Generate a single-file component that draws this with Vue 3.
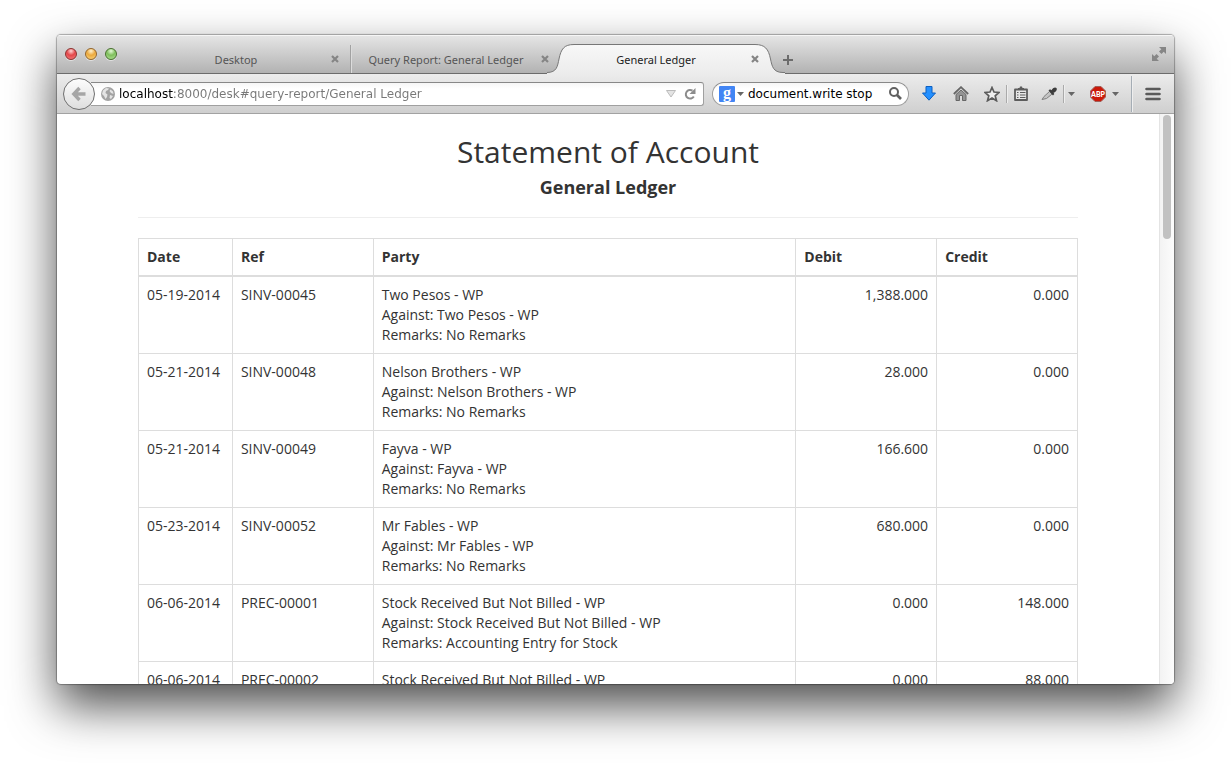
<script setup>
import { ref } from 'vue'

const tabs = [
  { title: 'Desktop', active: false },
  { title: 'Query Report: General Ledger', active: false },
  { title: 'General Ledger', active: true },
]

const address = ref('localhost:8000/desk#query-report/General Ledger')
const query = ref('document.write stop')

const stock = 'Stock Received But Not Billed - WP'
const rows = [
  { date: '05-19-2014', no: 'SINV-00045', party: 'Two Pesos - WP', remarks: 'No Remarks', debit: '1,388.000', credit: '0.000' },
  { date: '05-21-2014', no: 'SINV-00048', party: 'Nelson Brothers - WP', remarks: 'No Remarks', debit: '28.000', credit: '0.000' },
  { date: '05-21-2014', no: 'SINV-00049', party: 'Fayva - WP', remarks: 'No Remarks', debit: '166.600', credit: '0.000' },
  { date: '05-23-2014', no: 'SINV-00052', party: 'Mr Fables - WP', remarks: 'No Remarks', debit: '680.000', credit: '0.000' },
  { date: '06-06-2014', no: 'PREC-00001', party: stock, remarks: 'Accounting Entry for Stock', debit: '0.000', credit: '148.000' },
  { date: '06-06-2014', no: 'PREC-00002', party: stock, remarks: 'Accounting Entry for Stock', debit: '0.000', credit: '88.000' },
]
</script>

<template>
  <div class="stage">
    <div class="window">
      <header class="titlebar">
        <div class="lights">
          <button class="light red" aria-label="Close window"></button>
          <button class="light yellow" aria-label="Minimize window"></button>
          <button class="light green" aria-label="Zoom window"></button>
        </div>
        <nav class="tabs">
          <div v-for="tab in tabs" :key="tab.title" class="tab" :class="{ active: tab.active }">
            <svg v-if="tab.active" class="tab-shape" viewBox="0 0 238 30" width="238" height="30" aria-hidden="true">
              <defs>
                <linearGradient id="tabfill" x1="0" y1="0" x2="0" y2="1">
                  <stop offset="0" stop-color="#f8f8f8" />
                  <stop offset="1" stop-color="#ececec" />
                </linearGradient>
              </defs>
              <path d="M0 30V28.5C10 28.500 10.500 22 12 15C14 5 17 .500 27 .500H208C218 .500 221.500 5 223.500 15C225 22 226 28.500 236 28.500H238V30Z" fill="url(#tabfill)" />
              <path d="M0 28.500C10 28.500 10.500 22 12 15C14 5 17 .500 27 .500H208C218 .500 221.500 5 223.500 15C225 22 226 28.500 236 28.500H238" fill="none" stroke="#777" />
            </svg>
            <button class="tab-title">{{ tab.title }}</button>
            <button class="tab-close" :aria-label="'Close ' + tab.title">
              <svg viewBox="0 0 8 8" width="8" height="8"><path d="M1 1L7 7M7 1L1 7" stroke="#858585" stroke-width="2.200" /></svg>
            </button>
          </div>
        </nav>
        <button class="new-tab" aria-label="New tab">
          <svg viewBox="0 0 10 10" width="10" height="10"><path d="M5 0V10M0 5H10" stroke="#6c6c6c" stroke-width="2" /></svg>
        </button>
        <button class="fullscreen" aria-label="Full screen">
          <svg viewBox="0 0 14 14" width="14" height="14" fill="#868686">
            <path d="M7 0H14V7L11.700 4.700L9.500 7L7 4.500L9.300 2.300Z" />
            <path d="M0 7V14H7L4.700 11.700L7 9.500L4.500 7L2.300 9.300Z" />
          </svg>
        </button>
      </header>

      <div class="toolbar">
        <button class="back" aria-label="Back">
          <svg viewBox="0 0 16 16" width="16" height="16"><path d="M8.500 2L2.800 8L8.500 14M3.500 8H14.500" fill="none" stroke="#a6a6a6" stroke-width="3.400" /></svg>
        </button>
        <div class="address">
          <svg viewBox="0 0 14 14" width="14" height="14" aria-hidden="true">
            <circle cx="7" cy="7" r="7" fill="#a3a3a3" />
            <path d="M2 3.500L5 1L8 1.500L7 3L5 4L4.500 6L6.500 7.500L6 10L4.500 12L3 9L1 7ZM9.500 2.500L12 4.500L12.500 7L10 6L8.500 4ZM9 8L12 9L10 12L8.500 11Z" fill="#e4e4e4" />
          </svg>
          <input v-model="address" class="url" type="text" aria-label="Address" spellcheck="false" />
          <button class="plain" aria-label="Show history">
            <svg viewBox="0 0 10 8" width="10" height="8"><path d="M.500 .500H9.500L5 7Z" fill="#e4e4e4" stroke="#bbb" /></svg>
          </button>
          <button class="plain reload" aria-label="Reload">
            <svg viewBox="0 0 12 12" width="12" height="12">
              <path d="M8.500 2.700A4.300 4.300 0 1 0 9.800 8.500" fill="none" stroke="#8c8c8c" stroke-width="2" />
              <path d="M11.500 0V6H5.500Z" fill="#8c8c8c" />
            </svg>
          </button>
        </div>
        <div class="search">
          <button class="plain engine" aria-label="Search engine">
            <span class="g">g</span>
            <svg viewBox="0 0 7 4" width="7" height="4"><path d="M0 0H7L3.500 4Z" fill="#666" /></svg>
          </button>
          <input v-model="query" class="term" type="text" aria-label="Search" spellcheck="false" />
          <button class="plain" aria-label="Go">
            <svg viewBox="0 0 13 13" width="13" height="13" fill="none" stroke="#606060"><circle cx="5" cy="5" r="4" stroke-width="2" /><path d="M8 8L12 12" stroke-width="2.600" /></svg>
          </button>
        </div>

        <button class="tool" aria-label="Downloads">
          <svg viewBox="0 0 14 15" width="14" height="15"><path d="M4 .500H10V7H13.500L7 14.200L.500 7H4Z" fill="#2490ff" stroke="#0d5fc0" /></svg>
        </button>
        <button class="tool" aria-label="Home">
          <svg viewBox="0 0 16 15" width="16" height="15">
            <path d="M.800 8L8 1.200L15.200 8" fill="none" stroke="#666" stroke-width="1.800" />
            <path d="M3 8.500L8 4L13 8.500V14.500H9.500V9.500H6.500V14.500H3Z" fill="#949494" stroke="#666" />
          </svg>
        </button>
        <button class="tool star" aria-label="Bookmark">
          <svg viewBox="0 0 16 16" width="16" height="16"><path d="M8 1.500L10 6L15 6.500L11.200 9.800L12.500 14.700L8 12L3.500 14.700L4.800 9.800L1 6.500L6 6Z" fill="#eee" stroke="#5c5c5c" stroke-width="1.700" /></svg>
        </button>
        <i class="divider short"></i>
        <button class="tool narrow" aria-label="Bookmarks list">
          <svg viewBox="0 0 14 15" width="14" height="15">
            <path d="M1 3.500H13V14H1Z" fill="#e6e6e6" stroke="#5c5c5c" stroke-width="1.800" stroke-linejoin="round" />
            <path d="M4 4V2H5.500L6 .500H8L8.500 2H10V4Z" fill="#5c5c5c" />
            <path d="M3 6.500H4.500M6 6.500H11.500M3 9H4.500M6 9H11.500M3 11.500H4.500M6 11.500H11.500" stroke="#5c5c5c" stroke-width="1.200" />
          </svg>
        </button>
        <button class="tool narrow" aria-label="Colour picker">
          <svg viewBox="0 0 16 14" width="16" height="14">
            <path d="M1 12.500L3 9.500L8.500 4.500L11.200 7L5.500 11.500Z" fill="#c4c4c4" stroke="#808080" />
            <path d="M7.500 3.500L9 2.300L10.500 3.300C11.500 1 14 -.300 15.500 1C16.500 3 15 5 12.500 5.800L13.300 7L12 8.500Z" fill="#3c3c3c" />
          </svg>
        </button>
        <i class="divider short"></i>
        <button class="tool caret" aria-label="Picker menu">
          <svg viewBox="0 0 7 4" width="7" height="4"><path d="M0 0H7L3.500 4Z" fill="#666" /></svg>
        </button>
        <button class="tool abp" aria-label="Adblock Plus">
          <svg viewBox="0 0 16 16" width="16" height="16">
            <path d="M5 .500H11L15.500 5V11L11 15.500H5L.500 11V5Z" fill="#cb1a0b" stroke="#a0605a" />
            <text x="8" y="11" text-anchor="middle" class="abp-text">ABP</text>
          </svg>
        </button>
        <button class="tool caret" aria-label="Adblock menu">
          <svg viewBox="0 0 7 4" width="7" height="4"><path d="M0 0H7L3.500 4Z" fill="#666" /></svg>
        </button>
        <i class="divider tall"></i>
        <button class="tool menu" aria-label="Open menu">
          <svg viewBox="0 0 16 14" width="16" height="14"><path d="M1.500 2H14.500M1.500 7H14.500M1.500 12H14.500" stroke="#5a5a5a" stroke-width="2.600" stroke-linecap="round" /></svg>
        </button>
      </div>

      <div class="viewport">
        <main class="page">
          <h1>Statement of Account</h1>
          <h2>General Ledger</h2>
          <hr />
          <table>
            <colgroup>
              <col class="c10" /><col class="c15" /><col class="c45" /><col class="c15" /><col class="c15" />
            </colgroup>
            <thead>
              <tr><th>Date</th><th>Ref</th><th>Party</th><th>Debit</th><th>Credit</th></tr>
            </thead>
            <tbody>
              <tr v-for="row in rows" :key="row.no">
                <td>{{ row.date }}</td>
                <td>{{ row.no }}</td>
                <td>{{ row.party }}<br />Against: {{ row.party }}<br />Remarks: {{ row.remarks }}</td>
                <td class="num">{{ row.debit }}</td>
                <td class="num">{{ row.credit }}</td>
              </tr>
            </tbody>
          </table>
        </main>
        <div class="scrollbar"><div class="thumb"></div></div>
      </div>
    </div>
  </div>
</template>

<style>
body { background: #fff; }
</style>

<style scoped>
* { box-sizing: border-box; }
button, input { margin: 0; padding: 0; border: 0; background: none; font: inherit; color: inherit; outline: none; }
svg { display: block; flex: none; }

.stage {
  display: flex;
  height: 100vh;
  padding: 35px 57px 79px;
  overflow: hidden;
  font-family: "Open Sans", "Noto Sans", sans-serif;
}
.window {
  flex: 1;
  min-width: 0;
  display: flex;
  flex-direction: column;
  border-radius: 4px;
  overflow: hidden;
  background: #fff;
  box-shadow: 0 0 1px 1px rgba(0, 0, 0, .3), 0 22px 48px rgba(0, 0, 0, .7);
}

.titlebar {
  flex: none;
  display: flex;
  align-items: center;
  height: 39px;
  padding: 0 8px;
  border-bottom: 1px solid #6c6c6c;
  background: linear-gradient(#e6e6e6, #b2b2b2);
  box-shadow: inset 0 1px #f6f6f6;
  font-family: "Noto Sans", "Open Sans", sans-serif;
  font-size: 11px;
}
.lights { display: flex; gap: 8px; }
.light { width: 12px; height: 12px; border-radius: 50%; border: 1px solid; box-shadow: 0 1px rgba(255, 255, 255, .5); }
.red { border-color: #8c302e; background: radial-gradient(circle at 50% 20%, #ffd5d5 0, #e4474a 45%, #f58080 100%); }
.yellow { border-color: #93642a; background: radial-gradient(circle at 50% 20%, #fff2cf 0, #eca93c 45%, #fbd983 100%); }
.green { border-color: #48702f; background: radial-gradient(circle at 50% 20%, #e5fad8 0, #7fbf5c 45%, #b5e59a 100%); }
.tabs { display: flex; align-self: flex-end; margin-left: 24px; }
.tab { position: relative; display: flex; align-items: center; width: 210px; height: 28px; color: #555; }
.tab:first-child { box-shadow: inset -1px 0 #a2a2a2, 1px 0 #dcdcdc; }
.tab-shape { position: absolute; left: -14px; bottom: -1px; }
.tab-title { position: relative; flex: 1; height: 28px; text-align: center; }
.tab-close { position: relative; width: 8px; height: 8px; margin-right: 12px; }
.active { color: #222; }
.new-tab { align-self: flex-end; margin: 0 0 8px 12px; }
.fullscreen { margin-left: auto; }

.toolbar {
  flex: none;
  display: flex;
  align-items: center;
  height: 40px;
  padding-left: 6px;
  border-bottom: 1px solid #a2a2a2;
  background: linear-gradient(#ececec, #cfcfcf);
  font-family: "DejaVu Sans", "Noto Sans", sans-serif;
  font-size: 12px;
}
.back {
  position: relative;
  display: flex;
  align-items: center;
  justify-content: center;
  width: 32px;
  height: 32px;
  border: 1px solid #6f6f6f;
  border-radius: 50%;
  background: linear-gradient(#fdfdfd, #dedede);
}
.address, .search {
  display: flex;
  align-items: center;
  height: 24px;
  border: 1px solid #a0a0a0;
  border-top-color: #888;
  background: linear-gradient(#f6f6f6, #fff 6px);
}
.address { flex: 1; min-width: 0; margin-left: -4px; padding: 0 7px 0 10px; border-left: 0; border-radius: 0 3px 3px 0; }
.url {
  flex: 1;
  min-width: 0;
  height: 22px;
  margin-left: 4px;
  color: transparent;
  background: linear-gradient(90deg, #000 55px, #777 55px);
  -webkit-background-clip: text;
  background-clip: text;
}
.plain { display: flex; align-items: center; }
.reload { margin-left: 8px; }
.search { width: 197px; margin-left: 8px; padding: 0 6px; border-radius: 12px; }
.engine { gap: 2px; }
.g { width: 16px; height: 16px; border-radius: 1px; background: #4285f4; color: #fff; font: bold 16px/13px "Liberation Serif", serif; text-align: center; }
.term { flex: 1; min-width: 0; height: 22px; margin-left: 4px; color: #000; }

.tool { display: flex; align-items: center; justify-content: center; width: 32px; height: 32px; }
.search + .tool { margin-left: 4px; }
.star { width: 29px; }
.narrow { width: 28px; }
.caret { width: 14px; }
.abp { width: 20px; margin-left: 10px; }
.abp-text { font: 900 7px Lato, sans-serif; fill: #fff; }
.menu { width: 42px; }
.divider { width: 1px; background: #aaa; box-shadow: 1px 0 #eee; }
.short { height: 18px; }
.tall { height: 36px; margin-left: 9px; background: #a5adb5; }

.viewport { flex: 1; min-height: 0; display: flex; overflow: hidden; color: #333; font-size: 14px; line-height: 20px; }
.page { flex: 1; max-width: 940px; min-width: 0; margin: 0 auto; }
h1, h2 { margin: 0; text-align: center; }
h1 { padding-top: 21px; font-size: 30px; line-height: 33px; font-weight: 400; }
h2 { margin-top: 9px; font-size: 18px; line-height: 20px; font-weight: 700; }
hr { margin: 20px 0; border: 0; border-top: 1px solid #eee; }
table { width: 100%; table-layout: fixed; border-collapse: collapse; }
.c10 { width: 10%; }
.c15 { width: 15%; }
.c45 { width: 45%; }
th, td { padding: 8px; border: 1px solid #ddd; text-align: left; vertical-align: top; }
th { border-bottom-width: 2px; font-weight: 700; }
.num { text-align: right; }

.scrollbar { flex: none; width: 15px; padding: 1px 3px; border-left: 1px solid #e4e4e4; background: linear-gradient(90deg, #f3f3f3, #fcfcfc); }
.thumb { width: 8px; height: 124px; border-radius: 4px; background: #c1c1c1; }
</style>
